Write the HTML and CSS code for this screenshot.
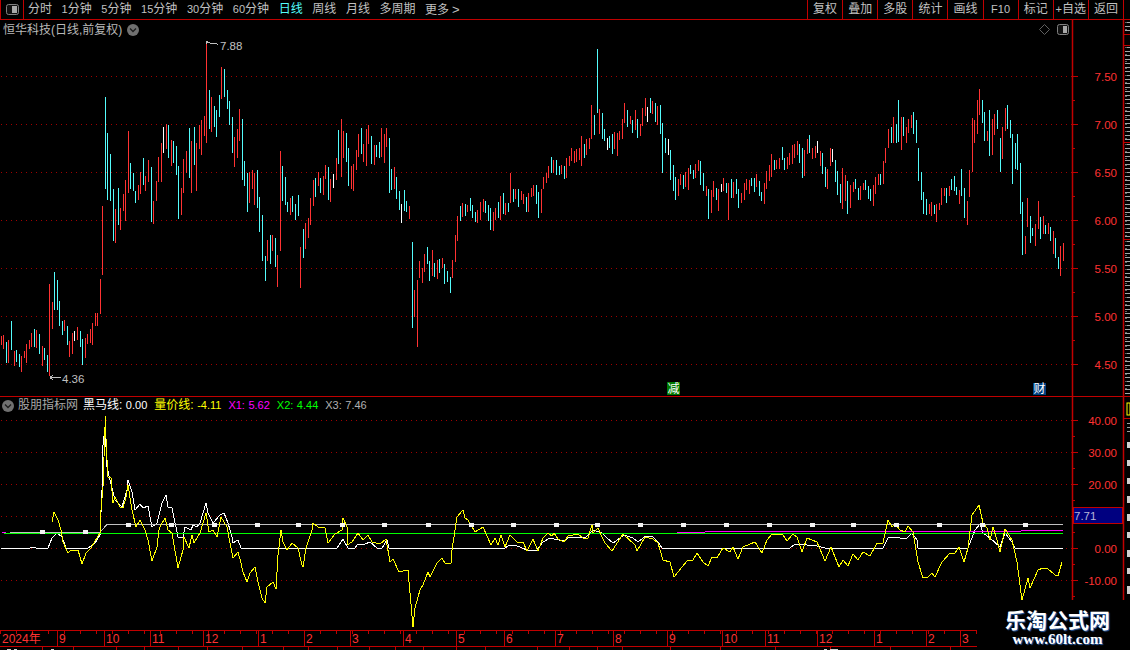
FILE: index.html
```html
<!DOCTYPE html>
<html lang="zh">
<head>
<meta charset="utf-8">
<title>恒华科技</title>
<link rel="stylesheet" href="styles.css">
</head>
<body>
<div class="app">
  <header class="toolbar">
    <div class="toggle">
      <svg class="panel-icon" width="13" height="11" viewBox="0 0 13 11"><rect class="pi-out" x="0.5" y="0.5" width="12" height="10" rx="2"/><rect class="pi-in" x="6" y="2" width="5" height="7"/></svg>
    </div>
    <nav class="periods">
      <span>分时</span><span><i>1</i>分钟</span><span><i>5</i>分钟</span><span><i>15</i>分钟</span><span><i>30</i>分钟</span><span><i>60</i>分钟</span><span class="active">日线</span><span>周线</span><span>月线</span><span>多周期</span><span>更多<b class="more">&gt;</b></span>
    </nav>
    <div class="tools">
      <span>复权</span><span>叠加</span><span>多股</span><span>统计</span><span>画线</span><span><i>F10</i></span><span>标记</span><span><i>+</i>自选</span><span>返回</span>
    </div>
  </header>

  <section class="pane price-pane">
    <div class="price-title">
      <span>恒华科技(日线,前复权)</span>
      <svg class="round" width="12" height="12" viewBox="0 0 12 12"><circle class="round-bg" cx="6" cy="6" r="6"/><path class="round-ch" d="M3 4.5 6 7.5 9 4.5"/></svg>
    </div>
    <svg class="chart" width="1130" height="376" viewBox="0 20 1130 376">
      <path class="grid" d="M1 76.500H1072M1 124.500H1072M1 172.500H1072M1 220.500H1072M1 268.500H1072M1 316.500H1072M1 364.500H1072"/>

      <g transform="translate(0 230) scale(.33333)">
        <path class="bar r" d="M4 318V345M12 315V357M27 330V400M43 363V407M64 378V426M73 363V384M79 342V399M88 330V357M94 308V351M109 300V354M127 348V408M148 162V438M157 216V297M193 270V303M208 333V381M217 309V372M232 291V330M256 324V384M262 312V342M271 297V339M277 279V345M286 249V288M292 249V288M301 147V252M307 -72V135M802 30V93M817 15V63M832 75V171"/>
        <path class="bar c" d="M19 336V399M34 273V360M49 360V396M58 372V411M103 297V351M118 312V372M133 354V390M142 375V426M163 126V240M172 150V240M178 213V288M187 273V315M202 288V345M241 303V351M247 327V405M787 -45V93M796 78V153M811 15V102M826 24V111"/>
        <path class="bar w" d="M223 303V333"/>
      </g>

      <g transform="translate(90 40) scale(.33333)">
        <path class="bar r" d="M76 507V609M91 504V570M100 462V513M106 420V543M115 273V459M145 435V480M151 396V462M166 408V453M175 360V426M190 483V552M199 423V483M205 351V426M214 309V426M229 252V327M244 300V378M274 444V525M280 357V459M289 333V399M304 303V459M319 309V453M328 255V327M334 240V345M343 228V288M349 10V309M364 171V276M394 81V177M433 291V381M442 267V354M448 207V303M478 396V489M487 390V447M493 399V495"/>
        <path class="bar c" d="M46 171V447M52 279V480M61 342V483M70 447V603M85 444V555M121 369V447M130 399V453M136 453V489M160 354V435M184 381V546M235 255V354M250 303V369M259 318V405M265 378V537M298 264V414M313 261V375M358 150V267M373 198V261M379 210V291M388 165V231M403 87V171M412 150V207M418 183V255M427 231V339M457 237V420M463 363V438M472 399V516M502 390V504M508 471V576"/>
        <path class="bar w" d="M220 261V339"/>
      </g>

      <g transform="translate(280 110) scale(.33333)">
        <path class="bar r" d="M1 123V423M31 264V315M61 411V534M76 339V417M85 324V384M91 264V345M100 210V288M115 186V228M130 198V255M136 165V207M151 207V276M169 144V210M184 27V201M190 63V144M214 168V237M220 162V243M229 120V180M235 72V141M250 102V156M259 57V168M265 45V102M283 105V165M304 54V141M313 72V159M319 54V111M343 171V237M388 288V327M403 540V621M412 510V711M418 453V504M427 474V519M433 432V486M457 420V498M472 450V507M487 444V474M517 450V504M526 375V456M532 318V393M547 279V321M562 285V306M592 300V339M601 276V330M610 267V306M640 306V363M646 294V330M661 258V330M676 279V315M691 189V279M706 237V267M724 243V270M730 252V282M745 249V306M754 234V261M760 225V258M784 237V309M790 201V237M799 189V219M805 168V204M820 150V189M844 165V192M859 144V204M868 138V168M874 114V153M883 123V159M889 117V156M898 114V150"/>
        <path class="bar c" d="M7 168V273M16 201V285M22 276V306M37 258V306M46 282V330M55 255V318M70 357V444M106 204V261M121 204V249M145 171V270M175 60V162M199 69V156M205 114V228M244 54V132M274 78V162M289 105V141M298 96V144M328 84V249M334 177V240M349 201V267M358 243V300M373 240V303M379 273V306M397 396V654M442 411V462M448 453V513M463 459V501M478 447V489M493 462V522M502 483V516M511 501V549M541 288V333M556 282V318M571 264V303M577 285V324M586 306V336M616 273V309M625 285V333M631 294V360M655 276V324M670 249V312M685 279V306M700 237V276M715 237V291M739 261V306M769 225V282M775 246V324M814 141V189M829 150V195M838 168V195M853 168V207"/>
        <path class="bar w" d="M160 192V234M364 282V339"/>
      </g>

      <g transform="translate(580 40) scale(.33333)">
        <path class="bar r" d="M4 288V378M19 297V345M28 294V327M34 195V297M58 207V282M103 276V327M112 279V348M118 273V300M127 237V297M133 189V249M151 228V252M166 210V270M181 252V288M187 204V258M196 174V228M217 183V222M232 198V255M295 417V468M301 402V435M316 396V441M325 384V450M346 372V414M355 360V393M379 438V468M394 450V519M400 423V471M415 447V513M430 414V453M445 429V540M460 426V474M484 459V489M493 429V480M499 417V450M508 420V462M529 402V441M553 429V492M559 393V447M568 375V423M574 342V411M589 360V387M598 354V387M622 351V387M628 339V375M637 315V372M643 312V354M652 303V345M673 330V408M682 297V342M697 324V357M706 318V354M721 333V378M742 387V447M751 324V378M787 384V507M796 405V483M811 435V504M820 426V456"/>
        <path class="bar c" d="M13 312V354M43 225V285M52 27V219M67 219V297M73 267V303M88 288V324M97 282V342M142 210V261M157 240V279M172 237V294M211 174V219M226 189V246M241 195V282M247 249V399M256 294V339M271 330V420M280 375V453M286 411V480M310 405V447M331 375V402M340 390V417M361 363V435M370 399V453M385 447V537M409 444V480M439 429V459M454 417V474M469 417V462M475 447V504M514 414V438M523 414V456M538 423V468M544 456V483M583 360V390M607 321V360M613 354V390M658 312V369M667 324V414M688 285V339M727 339V402M736 381V441M766 360V426M772 393V465M781 432V489M802 423V522M826 417V447M835 444V480"/>
        <path class="bar w" d="M82 294V330M202 201V246M265 297V345M424 432V456M712 303V339M757 327V366"/>
      </g>

      <g transform="translate(860 80) scale(.33333)">
        <path class="bar r" d="M1 318V360M10 309V330M40 315V378M46 291V342M55 282V315M70 243V312M76 204V249M85 147V204M100 111V189M124 111V210M139 141V189M145 117V159M154 105V144M208 372V402M214 366V408M229 372V426M238 369V390M244 324V375M253 324V348M268 318V348M298 330V372M322 363V435M328 270V351M337 114V276M343 120V189M352 60V162M358 27V105M382 153V183M397 117V225M403 102V165M427 141V237M436 84V153M496 468V522M502 354V441M526 432V498M535 363V447M550 408V462M565 429V462M580 453V522M601 498V588M610 489V543"/>
        <path class="bar c" d="M16 300V330M25 318V357M31 327V363M61 282V315M94 141V189M109 132V189M115 60V186M130 111V168M160 96V162M169 120V189M175 204V303M184 276V360M190 336V402M199 357V405M223 375V402M259 324V369M274 297V330M283 288V333M289 321V345M304 267V348M313 324V414M367 60V129M373 96V183M388 90V228M412 90V147M421 174V276M442 75V147M451 120V174M457 162V312M466 189V267M472 162V270M481 249V402M487 366V525M511 408V489M517 444V468M541 411V477M556 435V462M571 441V483M586 474V534M595 531V567"/>
      </g>

      <path class="note" d="M206 42h2l-2 -1v3M208 42.500l4 1 2 -.500 4 1.500M50 377.500h11M50 376v3M50 377.500l3 -2M50 377.500l3 2"/>
      <text class="note-t" x="220" y="50">7.88</text>
      <text class="note-t" x="62" y="383">4.36</text>

      <path class="diamond" d="M1044.500 24.500l5 5 -5 5 -5 -5z"/>
      <rect class="pi-out" x="1057.500" y="24.500" width="11" height="10" rx="2"/>
      <rect class="pi-in" x="1063" y="26" width="4" height="7"/>

      <rect class="flag-g" x="667" y="382" width="13" height="13"/>
      <text class="flag-t" x="673.500" y="393">减</text>
      <rect class="flag-b" x="1033" y="383" width="13" height="12"/>
      <text class="flag-t" x="1039.500" y="393">财</text>

      <path class="axis" d="M1072.500 20V396M1123.500 20V396"/>
      <path class="axis-t" d="M1073 76.500h5M1073 124.500h5M1073 172.500h5M1073 220.500h5M1073 268.500h5M1073 316.500h5M1073 364.500h5M1073 100.500h2M1073 148.500h2M1073 196.500h2M1073 244.500h2M1073 292.500h2M1073 340.500h2M1124 34.500h6M1124 45.500h6M1124 142.500h6M1124 239.500h6"/>
      <text class="lab" x="1117" y="81">7.50</text>
      <text class="lab" x="1117" y="129">7.00</text>
      <text class="lab" x="1117" y="177">6.50</text>
      <text class="lab" x="1117" y="225">6.00</text>
      <text class="lab" x="1117" y="273">5.50</text>
      <text class="lab" x="1117" y="321">5.00</text>
      <text class="lab" x="1117" y="369">4.50</text>
      <path class="hatch" d="M1127.500 22V33M1127.500 47V141M1127.500 144V238M1127.500 241V394"/>
      <path class="hatch2" d="M1126 22V33M1126 47V141M1126 144V238M1126 241V394"/>
    </svg>
  </section>

  <section class="pane ind-pane">
    <div class="ind-title">
      <svg class="round" width="12" height="12" viewBox="0 0 12 12"><circle class="round-bg" cx="6" cy="6" r="6"/><path class="round-ch" d="M3 4.500 6 7.500 9 4.500"/></svg>
      <span class="ind-name">股朋指标网</span>
      <span class="kv k-w"><span>黑马线:</span><i>0.00</i></span>
      <span class="kv k-y"><span>量价线:</span><i>-4.11</i></span>
      <span class="kv k-m"><i>X1:</i><i>5.62</i></span>
      <span class="kv k-g"><i>X2:</i><i>4.44</i></span>
      <span class="kv k-s"><i>X3:</i><i>7.46</i></span>
    </div>
    <svg class="chart" width="1130" height="233" viewBox="0 397 1130 233">
      <path class="grid" d="M1 420.500H1072M1 452.500H1072M1 484.500H1072M1 516.500H1072M1 548.500H1072M1 580.500H1072"/>

      <polyline class="ln white" points="1,548 30,548 33,547 36,548 48,548 52,538 57,533 62,537 66,548 88,548 95,543 100,535 102,490 103,445 105,427 107,467 110,480 115,500 122,507 127,490 128,480 132,492 135,510 140,504 143,508 148,506 152,527 157,523 162,503 166,495 168,507 172,508 178,537 183,537 185,527 191,530 193,525 197,527 200,523 206,503 208,513 213,523 220,515 224,513 228,523 232,537 233,543 238,540 241,548 337,548 343,539 348,548 355,548 358,544 365,544 370,542 377,548 382,548 387,540 389,548 505,548 510,545 515,545 527,550 537,550 543,542 550,538 563,541 570,537 580,537 585,538 593,530 602,533 607,538 613,543 624,535 633,538 638,542 646,536 653,537 659,543 662,548 790,548 795,544 807,545 817,546 825,548 883,548 888,538 895,537 900,538 907,538 912,533 917,540 918,548 968,548 975,530 980,524 983,533 990,538 1000,547 1005,533 1012,542 1015,548 1063,548"/>
      <polyline class="ln gray" points="10,532 100,532 107,524.500 1063,524.500"/>
      <path class="ln magenta" d="M2 532.500H6M677 532.500H705M705 531.500H1021M1021 530.500H1063"/>
      <path class="ln green" d="M4 533.500H1063"/>
      <polyline class="ln yellow" points="52,522 54,512 58,520 61,530 63,542 68,553 71,550 78,550 82,564 86,553 91,548 97,538 100,533 101,510 103,487 104,457 105,427 105,416 107,460 108,477 111,478 113,503 115,497 120,507 123,508 126,497 128,485 132,510 136,527 140,520 145,530 148,540 152,561 157,547 159,530 160,527 165,518 168,530 172,533 178,568 183,550 184,537 189,548 192,535 194,543 200,533 206,513 209,532 213,530 217,537 221,517 227,527 230,543 233,558 238,552 241,563 243,572 247,582 250,573 255,567 258,582 262,598 265,603 267,587 273,582 276,589 278,555 281,530 283,542 287,550 292,543 298,548 302,565 303,567 306,548 312,530 313,523 318,527 325,528 328,543 335,534 342,530 343,518 347,527 347,545 352,542 358,533 363,540 368,535 372,542 380,544 386,539 390,562 393,559 399,572 408,570 413,627 415,608 420,590 423,585 428,572 430,577 437,563 442,558 445,563 451,563 452,550 457,517 463,510 465,518 468,520 475,532 483,527 491,545 495,538 498,545 501,535 505,547 510,535 517,542 523,542 527,551 533,539 538,551 543,538 548,533 552,536 554,533 558,539 564,542 568,536 578,534 583,538 588,538 592,525 593,533 598,528 602,537 605,543 612,551 623,534 635,545 637,551 645,537 653,539 658,543 663,560 670,562 674,577 682,567 688,560 693,560 697,553 703,562 708,566 712,557 717,558 723,548 730,552 733,547 738,559 743,547 755,542 762,553 767,540 772,534 783,535 787,541 793,534 797,537 802,552 807,538 817,542 825,561 831,547 839,567 843,560 848,566 853,554 858,560 863,552 870,556 877,543 883,543 888,520 892,527 895,524 900,530 905,532 908,526 913,532 918,562 923,578 928,577 932,573 935,577 942,562 950,553 955,553 959,547 964,562 968,548 972,515 979,505 983,523 987,528 990,540 993,527 997,540 1000,552 1005,529 1012,540 1017,562 1022,600 1028,578 1030,588 1038,570 1043,568 1047,568 1055,575 1058,576 1062,562"/>
      <path class="marks" d="M40 532h5M83 532h5M126 524.500h5M169 524.500h5M212 524.500h5M255 524.500h5M296 524.500h5M340 524.500h5M382 524.500h5M426 524.500h5M469 524.500h5M511 524.500h5M554 524.500h5M595 524.500h5M638 524.500h5M681 524.500h5M724 524.500h5M767 524.500h5M810 524.500h5M851 524.500h5M894 524.500h5M937 524.500h5M980 524.500h5M1023 524.500h5"/>

      <path class="axis" d="M1072.500 397V630M1123.500 397V630"/>
      <path class="axis-t" d="M1073 420.500h5M1073 452.500h5M1073 484.500h5M1073 516.500h5M1073 548.500h5M1073 580.500h5M1073 436.500h2M1073 468.500h2M1073 500.500h2M1073 532.500h2M1073 564.500h2M1073 596.500h2M1124 418.500h6"/>
      <rect class="val-box" x="1073.500" y="507.500" width="49" height="16"/>
      <text class="val-t" x="1074" y="520">7.71</text>
      <text class="lab" x="1117" y="425">40.00</text>
      <text class="lab" x="1117" y="457">30.00</text>
      <text class="lab" x="1117" y="489">20.00</text>
      <text class="lab" x="1117" y="553">0.00</text>
      <text class="lab" x="1117" y="585">-10.00</text>
      <rect class="side-y" x="1127" y="403" width="3" height="12"/>
      <path class="side-g" d="M1127 423h3M1127 427h3M1127 431h3"/>
      <path class="side-w" d="M1128.500 442v6M1128.500 460v6M1128.500 478v6M1128.500 496v7M1128.500 514v7M1128.500 532v6M1128.500 550v7M1128.500 568v6M1128.500 586v8"/>
    </svg>
  </section>

  <section class="timeline">
    <svg class="chart" width="1130" height="20" viewBox="0 630 1130 20">
      <path class="axis-t" d="M0 630.500H977M0 646.500H977M57.500 630V646M104.500 630V646M150.500 630V646M203.500 630V646M258.500 630V646M304.500 630V646M350.500 630V646M403.500 630V646M456.500 630V646M504.500 630V646M555.500 630V646M613.500 630V646M667.500 630V646M722.500 630V646M765.500 630V646M817.500 630V646M874.500 630V646M926.500 630V646M960.500 630V646M42.500 647V650M73.500 647V650M116.500 647V650M144.500 647V650M178.500 647V650M207.500 647V650M242.500 647V650M283.500 647V650M308.500 647V650M337.500 647V650M369.500 647V650M395.500 647V650M423.500 647V650M456.500 647V650M485.500 647V650M537.500 647V650M569.500 647V650M597.500 647V650M622.500 647V650M670.500 647V650M720.500 647V650M775.500 647V650M830.500 647V650M890.500 647V650M950.500 647V650"/>
      <path class="t-ticks" d="M0 632H977"/>
      <path class="t-bits" d="M7 649h4M14 649h3M51 649h3M824 649h3M830 649h8"/>
      <text class="tl" x="2" y="643">2024年</text>
      <text class="tl" x="59" y="643">9</text>
      <text class="tl" x="106" y="643">10</text>
      <text class="tl" x="152" y="643">11</text>
      <text class="tl" x="205" y="643">12</text>
      <text class="tl" x="260" y="643">1</text>
      <text class="tl" x="306" y="643">2</text>
      <text class="tl" x="352" y="643">3</text>
      <text class="tl" x="405" y="643">4</text>
      <text class="tl" x="458" y="643">5</text>
      <text class="tl" x="506" y="643">6</text>
      <text class="tl" x="557" y="643">7</text>
      <text class="tl" x="615" y="643">8</text>
      <text class="tl" x="669" y="643">9</text>
      <text class="tl" x="724" y="643">10</text>
      <text class="tl" x="767" y="643">11</text>
      <text class="tl" x="819" y="643">12</text>
      <text class="tl" x="876" y="643">1</text>
      <text class="tl" x="928" y="643">2</text>
      <text class="tl" x="962" y="643">3</text>
    </svg>
  </section>

  <aside class="watermark">
    <div class="wm-cn">乐淘公式网</div>
    <div class="wm-en">www.60lt.com</div>
  </aside>
</div>
</body>
</html>
```

FILE: styles.css
```css
* { box-sizing: border-box; }
html, body { margin: 0; padding: 0; background: #000; }
body { font-family: "Liberation Sans", "Noto Sans CJK SC", sans-serif; font-size: 12px; color: #c0c0c0; }
i { font-style: normal; }

.app { position: relative; width: 1130px; height: 650px; overflow: hidden; background: #000; display: flex; flex-direction: column; }

.toolbar { display: flex; height: 20px; flex: none; border-bottom: 1px solid #c00000; align-items: stretch; line-height: 19px; }
.toggle { width: 24px; border-left: 1px solid #c00000; border-right: 1px solid #c00000; display: flex; align-items: center; justify-content: center; }
.panel-icon { display: block; }
.pi-out { fill: #111; stroke: #808080; stroke-width: 1; }
.pi-in { fill: #a8a8a8; }
.periods { display: flex; gap: 9.6px; padding-left: 4px; flex: 1; }
.periods i, .tools i { font-size: 11px; }
.periods .active { color: #54fcfc; }
.more { font-weight: normal; font-size: 13px; margin-left: 3px; }
.tools { width: 317px; margin-right: 6px; display: grid; grid-template-columns: repeat(9, 1fr); border-right: 1px solid #c00000; }
.tools span { border-left: 1px solid #c00000; text-align: center; white-space: nowrap; }

.pane { position: relative; flex: none; }
.price-pane { height: 376px; border: 0; }
.ind-pane { height: 234px; border-top: 1px solid #c00000; }
.chart { display: block; }
.timeline { height: 20px; flex: none; }

.price-title { position: absolute; left: 3px; top: 2px; height: 16px; display: flex; align-items: center; gap: 5px; line-height: 16px; color: #b8b8b8; }
.round { display: block; flex: none; }
.round-bg { fill: #707070; }
.round-ch { fill: none; stroke: #1c1c1c; stroke-width: 1.3; }

.ind-title { position: absolute; left: 2px; top: 1px; height: 15px; display: flex; align-items: center; gap: 7px; line-height: 15px; white-space: nowrap; }
.ind-name { color: #a8a8a8; margin-left: -3px; margin-right: -2px; }
.kv { display: flex; gap: 3.5px; }
.kv i { font-size: 11px; }
.k-w { color: #fff; }
.k-y { color: #ffff00; }
.k-m { color: #ff00ff; }
.k-g { color: #00ff00; }
.k-s { color: #b0b0b0; }

.grid { fill: none; stroke: #a00000; stroke-width: 1; stroke-dasharray: 1 4; shape-rendering: crispEdges; }
.bar { fill: none; stroke-width: 3; shape-rendering: crispEdges; }
.r { stroke: #ff3232; }
.c { stroke: #54fcfc; }
.w { stroke: #ffffff; }
.note { fill: none; stroke: #c0c0c0; stroke-width: 1; shape-rendering: crispEdges; }
.note-t { fill: #c0c0c0; font-size: 11.500px; }
.diamond { fill: none; stroke: #606060; }
.flag-g { fill: #007800; }
.flag-b { fill: #004080; }
.flag-t { fill: #fff; font-size: 12px; text-anchor: middle; font-family: "Noto Sans CJK SC", sans-serif; }
.axis { fill: none; stroke: #c00000; stroke-width: 1.500; }
.axis-t { fill: none; stroke: #c00000; stroke-width: 1; shape-rendering: crispEdges; }
.lab { fill: #ff3232; font-size: 11.500px; text-anchor: end; }
.hatch { fill: none; stroke: #a8a8a8; stroke-width: 5; stroke-dasharray: 1 3; shape-rendering: crispEdges; }
.hatch2 { fill: none; stroke: #606060; stroke-width: 2; stroke-dasharray: 1 6; shape-rendering: crispEdges; }

.ln { fill: none; stroke-width: 1; shape-rendering: crispEdges; }
.white { stroke: #ffffff; }
.gray { stroke: #c0c0c0; }
.magenta { stroke: #ff00ff; }
.green { stroke: #00ff00; }
.yellow { stroke: #ffff00; }
.marks { fill: none; stroke: #f4f4f4; stroke-width: 4; shape-rendering: crispEdges; }
.val-box { fill: #000080; stroke: #c00000; stroke-width: 1; }
.val-t { fill: #b4b4d8; font-size: 11.500px; }
.side-y { fill: none; stroke: #ffff00; }
.side-g { fill: none; stroke: #a0a0a0; shape-rendering: crispEdges; }
.side-w { fill: none; stroke: #d0d0d0; stroke-width: 3; shape-rendering: crispEdges; }
.t-ticks { fill: none; stroke: #c00000; stroke-width: 3; stroke-dasharray: 1 15; shape-rendering: crispEdges; }
.t-bits { fill: none; stroke: #d0d0d0; stroke-width: 1; shape-rendering: crispEdges; }
.tl { fill: #ff3232; font-size: 12px; }

.watermark { position: absolute; right: 0; bottom: 0; width: 153px; height: 50px; background: #000; display: flex; flex-direction: column; align-items: center; padding-top: 7px; padding-left: 8px; }
.wm-cn { font-family: "Noto Sans CJK SC", sans-serif; font-weight: 700; font-size: 21px; line-height: 24px; color: #fff; letter-spacing: 0; text-shadow: 1px 1px 1px #2a5ea8; }
.wm-en { font-family: "Liberation Serif", serif; font-weight: 700; font-size: 15px; line-height: 16px; color: #fff; text-shadow: 1px 1px 1px #2a5ea8; }
```
